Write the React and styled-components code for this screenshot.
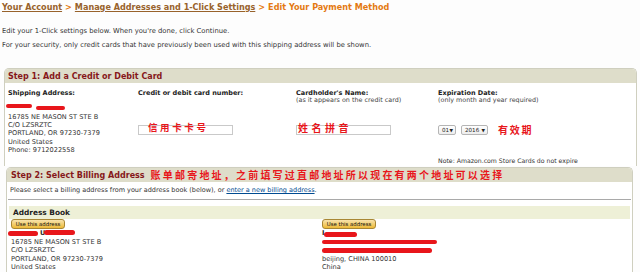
import React from "react";
import styled, { createGlobalStyle } from "styled-components";

const GlobalStyle = createGlobalStyle`
  html, body { margin: 0; padding: 0; background: #fdfdfd; }
  body {
    font-family: "DejaVu Sans", Verdana, sans-serif;
    color: #333;
    width: 640px;
    height: 272px;
    overflow: hidden;
  }
`;

const Page = styled.div`
  padding: 0;
`;

const Crumbs = styled.div`
  font-size: 8.1px;
  font-weight: bold;
  line-height: 14px;
  padding-left: 2px;
  color: #e47911;
  white-space: nowrap;
`;

const CrumbLink = styled.a`
  color: #98622b;
  text-decoration: underline;
`;

const Sep = styled.span`
  color: #e47911;
  margin: 0 3px;
`;

const Intro = styled.p`
  margin: ${(p) => p.$mt}px 0 0 2px;
  font-size: 6.8px;
  line-height: 10px;
  color: #333;
  white-space: nowrap;
`;

const StepBox = styled.section`
  margin: ${(p) => p.$mt}px ${(p) => p.$mr}px 0 ${(p) => p.$ml}px;
  border: 1px solid #cfcfbf;
  border-bottom: none;
  border-radius: 5px 5px 0 0;
  background: #fff;
`;

const StepHeader = styled.div`
  height: 14px;
  background: #deddca;
  border-radius: 4px 4px 0 0;
  display: flex;
  align-items: center;
  padding-left: ${(p) => p.$pl}px;
  gap: 6px;
`;

const StepTitle = styled.h2`
  margin: 0;
  font-size: 8px;
  font-weight: bold;
  color: #86181a;
  white-space: nowrap;
`;

const Note = styled.span`
  font-family: "Noto Sans CJK SC", sans-serif;
  font-weight: bold;
  color: #e8161b;
  font-size: ${(p) => p.$size || 9.5}px;
  letter-spacing: ${(p) => p.$ls || 2}px;
  line-height: 1;
  white-space: nowrap;
`;

const StepOneBody = styled.div`
  display: grid;
  grid-template-columns: 130px 158px 142px 1fr;
  padding: 6px 3px 1px 3px;
`;

const Col = styled.div`
  display: flex;
  flex-direction: column;
  align-items: flex-start;
`;

const Label = styled.div`
  font-size: 6.5px;
  font-weight: bold;
  line-height: 8px;
  color: #222;
  white-space: nowrap;
`;

const Sub = styled.div`
  font-size: 6.4px;
  line-height: 7px;
  color: #444;
  white-space: nowrap;
`;

const Line = styled.div`
  font-size: 6.6px;
  line-height: ${(p) => p.$lh || 8.2}px;
  height: ${(p) => p.$lh || 8.2}px;
  color: #333;
  white-space: nowrap;
  display: flex;
  align-items: center;
`;

const Redact = styled.span`
  display: inline-block;
  width: ${(p) => p.$w}px;
  height: ${(p) => p.$h || 4.5}px;
  background: #e8161b;
  border-radius: 3px;
  margin-left: ${(p) => p.$ml || 0}px;
  transform: translateY(${(p) => p.$dy || 0}px);
`;

const Strong = styled.span`
  font-weight: bold;
  color: #222;
  margin-left: ${(p) => p.$ml || 0}px;
`;

const FieldWrap = styled.div`
  position: relative;
  margin-top: ${(p) => p.$mt}px;
`;

const TextInput = styled.input`
  display: block;
  box-sizing: border-box;
  width: 95px;
  height: 10px;
  border: 1px solid #c9c9c9;
  background: #fff;
  padding: 0;
  margin: 0;
`;

const Overlay = styled.span`
  position: absolute;
  display: flex;
  left: ${(p) => p.$left}px;
  top: -2px;
  pointer-events: none;
`;

const DateRow = styled.div`
  display: flex;
  align-items: center;
  margin-top: 21px;
`;

const FakeSelect = styled.span`
  display: inline-flex;
  align-items: center;
  justify-content: space-between;
  box-sizing: border-box;
  width: ${(p) => p.$w}px;
  height: 10px;
  margin-right: ${(p) => p.$mr || 0}px;
  padding: 0 2px 0 3px;
  border: 1px solid #b5b5b5;
  border-radius: 2px;
  background: linear-gradient(#ffffff, #ededed);
  font-size: 5.6px;
  color: #222;
`;

const Arrow = styled.span`
  font-size: 4.5px;
`;

const StoreNote = styled.div`
  font-size: 6.2px;
  line-height: 8px;
  color: #333;
  margin-top: 22px;
  white-space: nowrap;
`;

const StepTwoBody = styled.div`
  padding: 4px 1px 0 1px;
`;

const Prompt = styled.div`
  font-size: 6.5px;
  line-height: 8px;
  padding-left: 2px;
  white-space: nowrap;
`;

const BlueLink = styled.a`
  color: #004b91;
  text-decoration: underline;
`;

const Rule = styled.hr`
  margin: 5px 0 0 0;
  border: none;
  border-top: 1px solid #a9a9a9;
`;

const BookBar = styled.div`
  margin: 6px 1px 0 1px;
  height: 13px;
  background: #eef0d7;
  display: flex;
  align-items: center;
  padding-left: 4px;
  font-size: 7.4px;
  font-weight: bold;
  color: #222;
`;

const BookGrid = styled.div`
  display: grid;
  grid-template-columns: 311px 1fr;
  padding-left: 3px;
`;

const UseButton = styled.button`
  display: block;
  box-sizing: border-box;
  width: 54px;
  height: 10px;
  padding: 0;
  border: 1px solid #a88734;
  border-radius: 3px;
  background: linear-gradient(#f8e3ad, #eeba37);
  font-family: "DejaVu Sans", sans-serif;
  font-size: 5.4px;
  color: #111;
  line-height: 8px;
`;

export default function App() {
  return (
    <Page>
      <GlobalStyle />
      <Crumbs>
        <CrumbLink>Your Account</CrumbLink>
        <Sep>&gt;</Sep>
        <CrumbLink>Manage Addresses and 1-Click Settings</CrumbLink>
        <Sep>&gt;</Sep>
        Edit Your Payment Method
      </Crumbs>
      <Intro $mt={12}>
        Edit your 1-Click settings below. When you're done, click Continue.
      </Intro>
      <Intro $mt={4}>
        For your security, only credit cards that have previously been used
        with this shipping address will be shown.
      </Intro>

      <StepBox $mt={18} $ml={4} $mr={3}>
        <StepHeader $pl={3}>
          <StepTitle>Step 1: Add a Credit or Debit Card</StepTitle>
        </StepHeader>
        <StepOneBody>
          <Col>
            <Label>Shipping Address:</Label>
            <Line $lh={16}>
              <Redact $w={26} $ml={-2} $dy={1} />
              <Redact $w={29} $ml={4} $dy={3} />
            </Line>
            <Line>16785 NE MASON ST STE B</Line>
            <Line>C/O LZSRZTC</Line>
            <Line>PORTLAND, OR 97230-7379</Line>
            <Line>United States</Line>
            <Line>Phone: 9712022558</Line>
          </Col>
          <Col>
            <Label>Credit or debit card number:</Label>
            <FieldWrap $mt={28}>
              <TextInput type="text" />
              <Overlay $left={10}>
                <Note $size={9.5} $ls={2.6}>信用卡卡号</Note>
              </Overlay>
            </FieldWrap>
          </Col>
          <Col>
            <Label>Cardholder's Name:</Label>
            <Sub>(as it appears on the credit card)</Sub>
            <FieldWrap $mt={21}>
              <TextInput type="text" />
              <Overlay $left={2}>
                <Note $size={10} $ls={3.5}>姓名拼音</Note>
              </Overlay>
            </FieldWrap>
          </Col>
          <Col>
            <Label>Expiration Date:</Label>
            <Sub>(only month and year required)</Sub>
            <DateRow>
              <FakeSelect $w={18} $mr={5}>
                01 <Arrow>▼</Arrow>
              </FakeSelect>
              <FakeSelect $w={27} $mr={10}>
                2016 <Arrow>▼</Arrow>
              </FakeSelect>
              <Note $size={10} $ls={1.7}>有效期</Note>
            </DateRow>
            <StoreNote>Note: Amazon.com Store Cards do not expire</StoreNote>
          </Col>
        </StepOneBody>
      </StepBox>

      <StepBox $mt={1} $ml={6} $mr={7}>
        <StepHeader $pl={4}>
          <StepTitle>Step 2: Select Billing Address</StepTitle>
          <Note $size={10} $ls={2.2}>
            账单邮寄地址，之前填写过直邮地址所以现在有两个地址可以选择
          </Note>
        </StepHeader>
        <StepTwoBody>
          <Prompt>
            Please select a billing address from your address book (below), or{" "}
            <BlueLink>enter a new billing address</BlueLink>.
          </Prompt>
          <Rule />
          <BookBar>Address Book</BookBar>
          <BookGrid>
            <Col>
              <UseButton>Use this address</UseButton>
              <Line $lh={8.6}>
                <Redact $w={30} $ml={-3} />
                <Strong $ml={2}>U</Strong>
                <Redact $w={31} $ml={-1} $dy={-1} />
              </Line>
              <Line $lh={8.6}>16785 NE MASON ST STE B</Line>
              <Line $lh={8.6}>C/O LZSRZTC</Line>
              <Line $lh={8.6}>PORTLAND, OR 97230-7379</Line>
              <Line $lh={8.6}>United States</Line>
            </Col>
            <Col>
              <UseButton>Use this address</UseButton>
              <Line $lh={8.6}>
                <Strong>I</Strong>
                <Redact $w={33} $ml={0} $dy={1} />
              </Line>
              <Line $lh={8.6}>
                <Redact $w={115} />
              </Line>
              <Line $lh={8.6}>
                <Redact $w={110} />
              </Line>
              <Line $lh={8.6}>beijing, CHINA 100010</Line>
              <Line $lh={8.6}>China</Line>
            </Col>
          </BookGrid>
        </StepTwoBody>
      </StepBox>
    </Page>
  );
}
